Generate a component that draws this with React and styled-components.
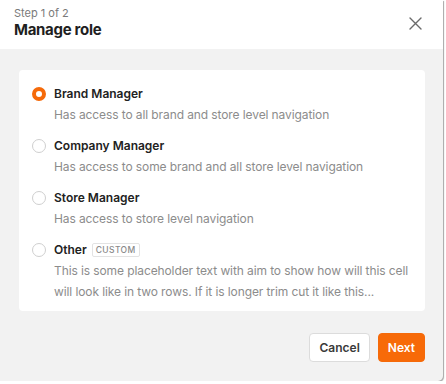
import React, { useState } from 'react';
import styled, { createGlobalStyle } from 'styled-components';

const GlobalStyle = createGlobalStyle`
  body {
    margin: 0;
    background: #fff;
    font-family: Inter, "Noto Sans", sans-serif;
    -webkit-font-smoothing: antialiased;
  }
`;

const Modal = styled.div`
  width: 443px;
  height: 381px;
  display: flex;
  flex-direction: column;
  background: #f2f2f2;
  border-radius: 0 0 5px 0;
  box-shadow: 1px 1px 1px rgba(0, 0, 0, 0.35);
  overflow: hidden;
`;

const Header = styled.header`
  flex: none;
  height: 49px;
  box-sizing: border-box;
  background: #fff;
  display: flex;
  align-items: flex-start;
  justify-content: space-between;
  padding: 6px 21px 0 14px;
`;

const Step = styled.div`
  font-size: 11px;
  color: #7a7a7a;
  line-height: 14px;
`;

const Title = styled.h1`
  margin: 0;
  font-size: 15px;
  font-weight: 700;
  color: #1f1f1f;
  line-height: 20px;
  letter-spacing: -0.3px;
`;

const Close = styled.button`
  border: 0;
  background: none;
  padding: 0;
  margin-top: 11px;
  width: 13px;
  height: 13px;
  cursor: pointer;
  display: flex;
`;

const Body = styled.div`
  flex: 1;
  padding: 21px 18px 0 19px;
  display: flex;
  flex-direction: column;
`;

const Card = styled.div`
  background: #fff;
  border-radius: 4px;
  padding: 16px 12px 9px 13px;
  display: flex;
  flex-direction: column;
  gap: 13px;
`;

const Option = styled.label`
  display: flex;
  gap: 8px;
  cursor: pointer;
`;

const Radio = styled.span`
  flex: none;
  box-sizing: border-box;
  width: 14px;
  height: 14px;
  margin-top: 1px;
  border-radius: 50%;
  border: ${(p) => (p.$checked ? '4px solid #f56a0a' : '1px solid #cfcfcf')};
  background: #fff;
`;

const Text = styled.div`
  display: flex;
  flex-direction: column;
  gap: 4px;
`;

const Name = styled.div`
  display: flex;
  align-items: center;
  gap: 5px;
  font-size: 12px;
  font-weight: 600;
  color: #222;
  line-height: 16px;
`;

const Badge = styled.span`
  font-size: 8.5px;
  font-weight: 500;
  letter-spacing: 0.4px;
  color: #8a8a8a;
  border: 1px solid #e3e3e3;
  border-radius: 2px;
  padding: 1px 3px;
  line-height: 10px;
`;

const Desc = styled.div`
  font-size: 12px;
  letter-spacing: -0.1px;
  color: #8c8c8c;
  line-height: 21px;
  margin-top: -2px;
`;

const Footer = styled.div`
  display: flex;
  justify-content: flex-end;
  gap: 8px;
  padding: 22px 0 0;
`;

const Button = styled.button`
  height: 29px;
  padding: 0 9px;
  border-radius: 4px;
  font-family: inherit;
  font-size: 12px;
  font-weight: 600;
  cursor: pointer;
  border: 1px solid ${(p) => (p.$primary ? '#f56a0a' : '#dcdcdc')};
  background: ${(p) => (p.$primary ? '#f76a08' : '#fff')};
  color: ${(p) => (p.$primary ? '#fff' : '#3a3a3a')};
`;

const options = [
  { id: 'brand', name: 'Brand Manager', desc: 'Has access to all brand and store level navigation' },
  { id: 'company', name: 'Company Manager', desc: 'Has access to some brand and all store level navigation' },
  { id: 'store', name: 'Store Manager', desc: 'Has access to store level navigation' },
  {
    id: 'other',
    name: 'Other',
    badge: 'CUSTOM',
    desc: 'This is some placeholder text with aim to show how will this cell will look like in two rows. If it is longer trim cut it like this...',
  },
];

export default function App() {
  const [role, setRole] = useState('brand');
  return (
    <>
      <GlobalStyle />
      <Modal>
        <Header>
          <div>
            <Step>Step 1 of 2</Step>
            <Title>Manage role</Title>
          </div>
          <Close aria-label="Close">
            <svg width="13" height="13" viewBox="0 0 13 13">
              <path d="M1 1l11 11M12 1L1 12" stroke="#6b6b6b" strokeWidth="1.4" strokeLinecap="round" />
            </svg>
          </Close>
        </Header>
        <Body>
          <Card>
            {options.map((o) => (
              <Option key={o.id} onClick={() => setRole(o.id)}>
                <Radio $checked={role === o.id} />
                <Text>
                  <Name>
                    {o.name}
                    {o.badge && <Badge>{o.badge}</Badge>}
                  </Name>
                  <Desc>{o.desc}</Desc>
                </Text>
              </Option>
            ))}
          </Card>
          <Footer>
            <Button>Cancel</Button>
            <Button $primary>Next</Button>
          </Footer>
        </Body>
      </Modal>
    </>
  );
}
